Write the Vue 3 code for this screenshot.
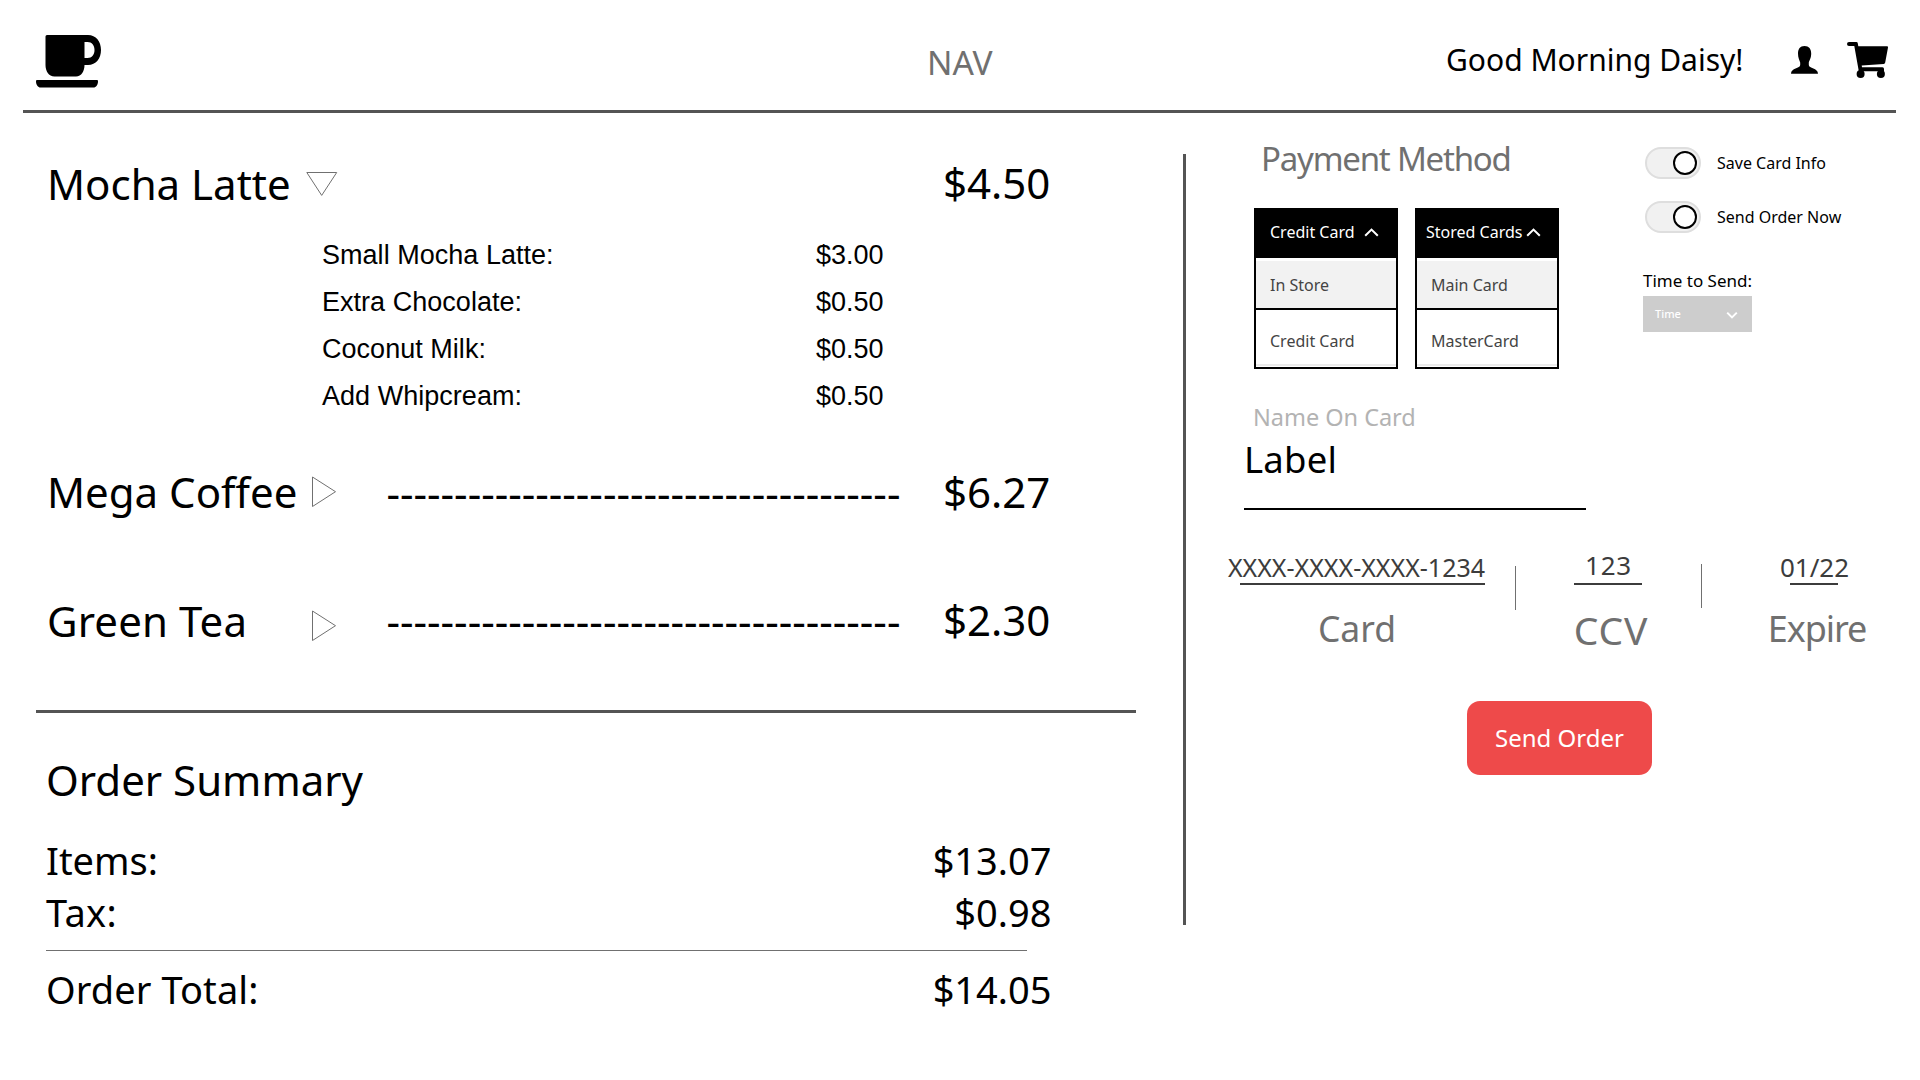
<script setup>
const extras = [
  { label: 'Small Mocha Latte:', price: '$3.00' },
  { label: 'Extra Chocolate:', price: '$0.50' },
  { label: 'Coconut Milk:', price: '$0.50' },
  { label: 'Add Whipcream:', price: '$0.50' },
]
const dashes = '-'.repeat(38)
const toggles = ['Save Card Info', 'Send Order Now']
const menus = [
  { id: 'method', title: 'Credit Card', options: ['In Store', 'Credit Card'] },
  { id: 'stored', title: 'Stored Cards', options: ['Main Card', 'MasterCard'] },
]
</script>

<template>
  <div class="page">
    <header class="bar">
      <svg class="cup" width="66" height="54" viewBox="0 0 66 54">
        <path fill-rule="evenodd" d="M11 0H52C60 0 65 6.500 65 15S60 30 52 30H48.500C48.500 36 45.500 41.500 40 41.500H18.500C12.500 41.500 9.500 36 9.500 30V1.500Q9.500 0 11 0ZM48.500 7V23H51.500C56 23 58.500 19.500 58.500 15S56 7 51.500 7Z" />
        <path d="M1 45H61Q62 45 62 46C62 50 60 52.500 57.500 52.500H4.500C2 52.500 0 50 0 46Q0 45 1 45Z" />
      </svg>
      <div class="nav">NAV</div>
      <div class="greeting">Good Morning Daisy!</div>
      <svg class="user" width="27" height="28" viewBox="0 0 27 28">
        <path d="M13.500 0C18 0 20.200 3 20.200 7.500C20.200 12 18.500 14 17.800 16.500V19C17.800 22.500 27 22 27 27.700H0C0 22 9.200 22.500 9.200 19V16.500C8.500 14 7 12 7 7.500C7 3 9 0 13.500 0Z" />
      </svg>
      <svg class="cart" width="42" height="36" viewBox="0 0 42 36">
        <path d="M2 0H9.500Q10.500 0 10.700 1L11.300 4.300H40Q41.200 4.300 41 5.500L38.200 20.500Q38 21.800 36.700 22L14.700 23.400L15 25.300H35.500Q37 25.300 37 27V29.300H11.800L7.300 4H2Q0 4 0 2T2 0Z" />
        <circle cx="13.600" cy="32" r="4" /><circle cx="33.900" cy="32" r="4" />
      </svg>
    </header>

    <main class="body">
      <section class="order">
        <div class="item mocha">
          <span class="name">Mocha Latte</span>
          <svg class="tri" width="32" height="25" viewBox="0 0 32 25"><path d="M.8 .5H30.700L15.700 23.400Z" /></svg>
          <span></span>
          <span class="price">$4.50</span>
        </div>
        <ul class="extras">
          <li v-for="e in extras" :key="e.label"><span>{{ e.label }}</span><span>{{ e.price }}</span></li>
        </ul>
        <div class="item mega">
          <span class="name">Mega Coffee</span>
          <svg class="tri right" width="25" height="32" viewBox="0 0 25 32"><path d="M.5 1V30.500L23.500 15.700Z" /></svg>
          <span class="dashes">{{ dashes }}</span>
          <span class="price">$6.27</span>
        </div>
        <div class="item tea">
          <span class="name">Green Tea</span>
          <svg class="tri right" width="25" height="32" viewBox="0 0 25 32"><path d="M.5 1V30.500L23.500 15.700Z" /></svg>
          <span class="dashes">{{ dashes }}</span>
          <span class="price">$2.30</span>
        </div>
        <div class="rule"></div>
        <div class="summary">
          <h2>Order Summary</h2>
          <div class="line"><span>Items:</span><span>$13.07</span></div>
          <div class="line tax"><span>Tax:</span><span>$0.98</span></div>
          <div class="thin"></div>
          <div class="line total"><span>Order Total:</span><span>$14.05</span></div>
        </div>
      </section>

      <div class="divider"></div>

      <section class="payment">
        <div class="top">
          <div class="methods">
            <h3>Payment Method</h3>
            <div class="menus">
              <div v-for="m in menus" :key="m.id" class="menu" :class="m.id">
                <div class="head">
                  <span>{{ m.title }}</span>
                  <svg width="15" height="9" viewBox="0 0 15 9"><path d="M1.200 7.800L7.500 1.600L13.800 7.800" /></svg>
                </div>
                <div class="opt first">{{ m.options[0] }}</div>
                <div class="opt second">{{ m.options[1] }}</div>
              </div>
            </div>
          </div>
          <div class="settings">
            <div v-for="t in toggles" :key="t" class="toggle">
              <span class="track"><span class="thumb"></span></span>
              <span>{{ t }}</span>
            </div>
            <div class="when">Time to Send:</div>
            <div class="time">
              <span>Time</span>
              <svg width="12" height="9" viewBox="0 0 12 9"><path d="M1.200 1.600L6 6.400L10.800 1.600" /></svg>
            </div>
          </div>
        </div>

        <div class="holder">
          <div class="hint">Name On Card</div>
          <div class="value">Label</div>
        </div>

        <div class="card">
          <div class="field number">
            <div class="val">XXXX-XXXX-XXXX-1234</div>
            <div class="under"></div>
            <div class="cap">Card</div>
          </div>
          <div class="sep"></div>
          <div class="field ccv">
            <div class="val">123</div>
            <div class="under"></div>
            <div class="cap">CCV</div>
          </div>
          <div class="sep second-sep"></div>
          <div class="field expire">
            <div class="val">01/22</div>
            <div class="under"></div>
            <div class="cap">Expire</div>
          </div>
        </div>

        <button class="send">Send Order</button>
      </section>
    </main>
  </div>
</template>

<style>
body { margin: 0; background: #fff; overflow: hidden; }
</style>

<style scoped>
.page { width: 1920px; height: 1080px; overflow: hidden; background: #fff; color: #000; font-family: "Noto Sans", "Open Sans", sans-serif; white-space: nowrap; }
h2, h3, ul { margin: 0; padding: 0; font-weight: 400; list-style: none; }

.bar { box-sizing: border-box; display: flex; align-items: flex-start; height: 113px; margin: 0 24px 0 23px; padding-left: 13px; border-bottom: 3px solid #545454; }
.cup { margin-top: 35px; }
.nav { width: 519px; margin: 40px 0 0 825px; font-size: 33.500px; line-height: 44px; color: #707070; }
.greeting { width: 345px; margin-top: 38px; font-size: 30px; line-height: 44px; }
.user { margin-top: 46px; }
.cart { margin: 42px 0 0 29px; }

.body { display: flex; align-items: flex-start; }
.order { width: 1183px; padding-top: 40px; }
.item { display: grid; grid-template: 60px / 259.500px 80px 556.500px auto; align-items: center; height: 60px; padding-left: 47px; font-size: 42px; line-height: 60px; }
.mocha .name { padding-top: 2px; }
.mocha .tri { margin: 2px 0 0 -0.500px; }
.dashes { padding-top: 2px; }
.tri { fill: none; stroke: #707070; stroke-width: 1; }
.tri.right { margin-left: 5.500px; }
.extras { margin: 19px 0 42px 322px; font: 27px/47px "Liberation Sans", Arial, sans-serif; }
.extras li { display: flex; height: 47px; }
.extras li span:first-child { width: 494px; letter-spacing: 0.03px; }
.tea { margin-top: 68px; }
.tea .name { padding-top: 1px; letter-spacing: 0.120px; }
.tea .tri { margin-top: 12px; }
.rule { width: 1100px; height: 3px; margin: 60px 0 0 35.500px; background: #545454; }
.summary { width: 1005.500px; padding-left: 46px; }
.summary h2 { margin-top: 37px; font-size: 42px; line-height: 60px; }
.line { display: flex; justify-content: space-between; height: 52px; font-size: 38px; line-height: 52px; }
.summary h2 + .line { margin-top: 24px; }
.tax span:first-child { letter-spacing: 0.300px; }
.total span:first-child { letter-spacing: 0.080px; }
.thin { width: 981px; height: 1px; margin-top: 12px; background: #707070; }
.total { margin-top: 12px; }

.divider { width: 3px; height: 771px; margin-top: 41px; background: #545454; }

.payment { width: 734px; }
.top { display: flex; height: 256px; padding-left: 68px; }
.methods { width: 389px; }
h3 { margin: 24px 0 27px 7px; font-size: 33px; line-height: 44px; letter-spacing: -1.220px; color: #707070; }
.menus { display: flex; gap: 17px; }
.menu { box-sizing: border-box; width: 144px; height: 161px; border: 2px solid #000; font-size: 16px; background: #fff; }
.head { box-sizing: border-box; display: flex; align-items: center; height: 48px; padding: 0 0 4px 14px; background: #000; color: #fff; }
.head span { width: 94px; }
.stored .head { padding-left: 9px; }
.stored .head span { width: 99.500px; }
.head svg { fill: none; stroke: #fff; stroke-width: 2; }
.opt { padding-left: 14px; color: #444; }
.first { height: 47px; margin-top: 3px; border-bottom: 2px solid #000; background: #f2f2f2; line-height: 48px; }
.second { height: 54px; line-height: 63px; border-bottom: 2px solid #ebebeb; }
.settings { padding-top: 34px; }
.toggle { display: flex; align-items: center; height: 32px; margin-bottom: 22px; padding-left: 2px; font-size: 16px; }
.track { box-sizing: border-box; display: flex; justify-content: flex-end; width: 56px; height: 32px; margin-right: 16px; padding: 2px; border: 2px solid #dedede; border-radius: 16px; background: #f1f1f1; }
.thumb { box-sizing: border-box; width: 24px; height: 24px; border: 2px solid #000; border-radius: 50%; background: #fff; }
.when { margin-top: 35px; font-size: 17px; line-height: 25px; }
.time { display: flex; align-items: center; justify-content: space-between; box-sizing: border-box; width: 109px; height: 36px; margin-top: 3px; padding: 0 14.500px 0 12px; background: #cdcdcd; color: #fff; font-size: 11px; font-weight: 500; }
.time span { padding-bottom: 2px; }
.time svg { fill: none; stroke: #fff; stroke-width: 2; margin-top: 2px; }

.holder { box-sizing: border-box; width: 342px; height: 141px; margin-left: 58px; padding-top: 32px; border-bottom: 2px solid #000; }
.hint { padding-left: 9px; font-size: 23.500px; line-height: 32px; letter-spacing: -0.030px; color: #b3b3b3; }
.value { font-size: 36.500px; line-height: 50px; padding-top: 1px; letter-spacing: 0.2px; }

.card { display: flex; align-items: flex-start; margin: 42px 0 0 42px; }
.field { display: flex; flex-direction: column; align-items: center; }
.val { height: 31px; font-size: 26px; line-height: 30px; color: #3c3c3c; }
.under { height: 2px; background: #3c3c3c; }
.cap { margin-top: 19px; font-size: 35.500px; line-height: 48px; color: #707070; }
.number { width: 257px; }
.number .val { font-size: 25px; }
.number .cap { margin-left: 1px; }
.number .under { width: 245px; align-self: flex-end; }
.sep { width: 1px; height: 44px; margin: 14px 58px 0 30px; background: #707070; }
.ccv { width: 68px; }
.ccv .val { margin-left: 1px; line-height: 27px; letter-spacing: 0.8px; }
.ccv .under { width: 68px; }
.ccv .cap { margin-left: 6px; font-size: 39px; line-height: 51px; letter-spacing: 0.8px; }
.second-sep { margin: 12px 64px 0 59px; }
.expire { width: 96px; }
.expire .val { margin-left: 1px; }
.expire .under { width: 48px; }
.expire .cap { margin-left: 6px; font-size: 36px; line-height: 50px; letter-spacing: -1.100px; }

.send { display: block; width: 185px; height: 74px; margin: 46px 0 0 281px; padding: 0 0 2px; border: 0; border-radius: 13px; background: #ee4a4a; color: #fff; font-family: inherit; font-size: 24px; }
</style>
